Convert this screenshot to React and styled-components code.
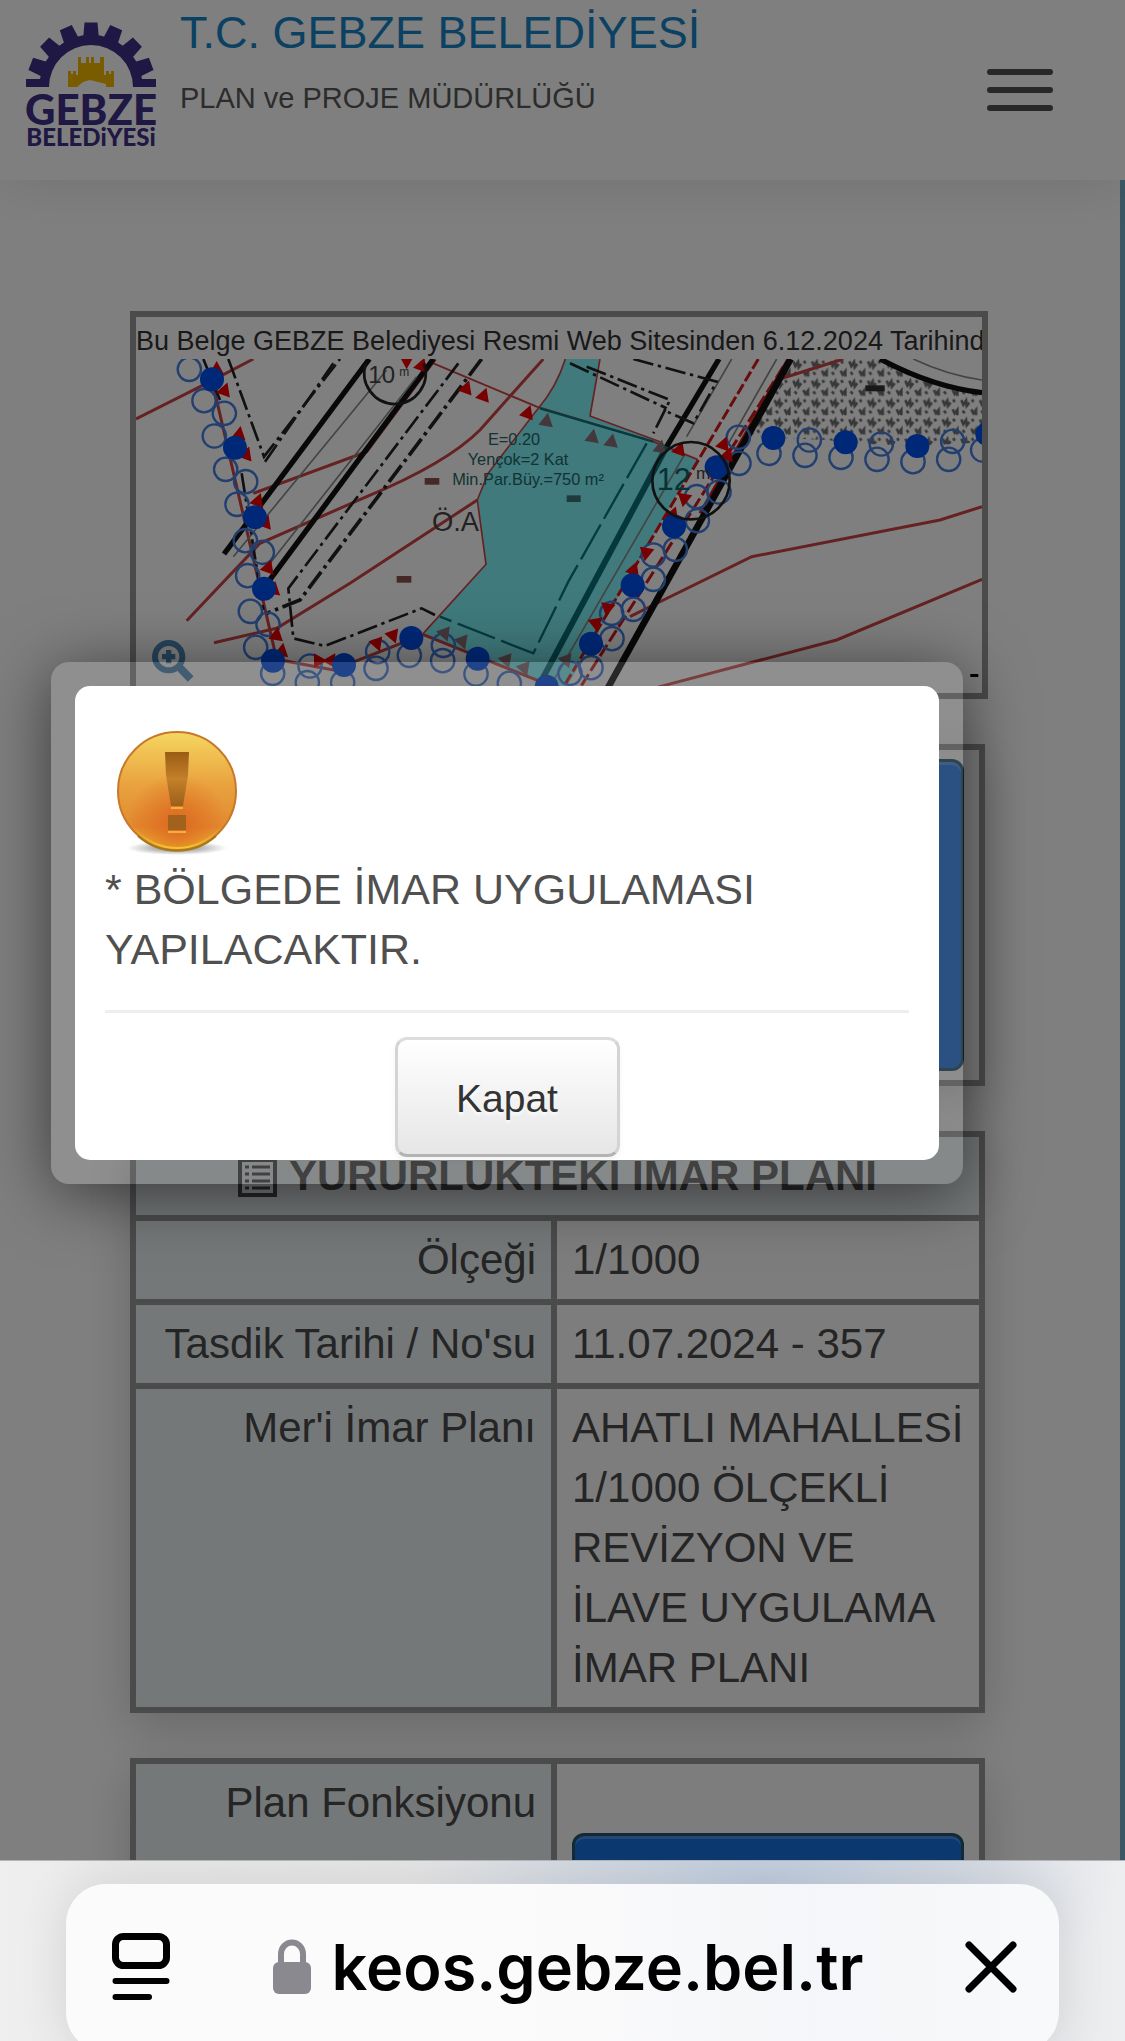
import React from "react";
import styled, { createGlobalStyle } from "styled-components";

const sans = '"Liberation Sans", Arial, Helvetica, sans-serif';

const GlobalStyle = createGlobalStyle`
  *, *::before, *::after { box-sizing: border-box; }
  html, body { margin: 0; height: 100%; overflow: hidden; }
  body { font-family: ${sans}; color: #4a4a4a; background: #fff; }
  h1, p { margin: 0; }
  button { font: inherit; cursor: pointer; }
`;

const Screen = styled.div`
  display: flex;
  flex-direction: column;
  height: 100vh;
`;

const Viewport = styled.div`
  position: relative;
  flex: 1;
  min-height: 0;
  overflow: hidden;
  background: #fff;
`;

const Header = styled.header`
  position: relative;
  display: flex;
  align-items: flex-start;
  gap: 22px;
  height: 180px;
  padding: 3px 70px 0 24px;
  background: #fff;
  box-shadow: 0 0 60px rgba(0, 0, 0, 0.12);
`;

const LogoLink = styled.a`
  display: block;
  padding-top: 17px;
  svg { display: block; overflow: visible; }
`;

const Brand = styled.div`
  flex: 1;
`;

const BrandTitle = styled.h1`
  font-size: 45px;
  line-height: 60px;
  font-weight: 400;
  color: #1782c4;
`;

const BrandUnit = styled.p`
  padding-top: 5px;
  font-size: 29px;
  line-height: 60px;
  color: #585858;
`;

const MenuButton = styled.button`
  display: flex;
  flex-direction: column;
  gap: 12px;
  width: 70px;
  padding: 66px 2px 12px;
  border: 0;
  background: none;
  span {
    height: 6px;
    border-radius: 3px;
    background: #505050;
  }
`;

const Main = styled.main`
  display: flex;
  flex-direction: column;
  gap: 45px;
  padding: 131px 132px 0 130px;
  border-right: 5px solid #7ab0c8;
`;

const MapFrame = styled.figure`
  margin: 0;
  display: flex;
  flex-direction: column;
  border: 6px solid #969696;
  background: #fff;
  overflow: hidden;
`;

const MapCaption = styled.figcaption`
  font-size: 27px;
  line-height: 42px;
  padding-top: 3px;
  height: 42px;
  color: #333;
  white-space: nowrap;
  overflow: hidden;
`;

const MapDrawing = styled.svg`
  display: block;
  width: 100%;
  height: auto;
`;

const InfoTable = styled.table`
  width: calc(100% - 3px);
  border-collapse: collapse;
  table-layout: fixed;
  font-size: 42px;
  line-height: 60px;
  background: #fafafa;
  box-shadow: 0 15px 45px rgba(0, 0, 0, 0.18);
`;

const cell = `
  border: 6px solid #969696;
  padding: 9px 15px;
  vertical-align: top;
`;

const Caption = styled.th`
  ${cell}
  background: #eaf1f3;
  text-align: center;
  svg { vertical-align: -7px; margin-right: 12px; }
`;

const Label = styled.th`
  ${cell}
  background: #eaf1f3;
  font-weight: 400;
  text-align: right;
`;

const Value = styled.td`
  ${cell}
  padding-right: ${(p) => (p.$text ? "9px" : "15px")};
`;

const BlueButton = styled.button`
  display: block;
  width: 100%;
  height: 312px;
  margin-top: ${(p) => (p.$lowered ? "60px" : "0")};
  border: 3px solid #20546e;
  border-radius: 12px;
  background: #1870e0;
  box-shadow: inset 0 3px 0 rgba(255, 255, 255, 0.2);
`;

const Backdrop = styled.div`
  position: absolute;
  inset: 0;
  display: flex;
  align-items: flex-start;
  padding: 662px 162px 0 51px;
  background: rgba(0, 0, 0, 0.5);
`;

const DialogFrame = styled.div`
  flex: 1;
  padding: 24px;
  border-radius: 18px;
  background: rgba(255, 255, 255, 0.13);
  box-shadow: 0 9px 66px rgba(0, 0, 0, 0.55);
`;

const Dialog = styled.section`
  display: flex;
  flex-direction: column;
  padding: 36px 30px 3px;
  border-radius: 15px;
  background: #fff;
`;

const Message = styled.p`
  font-size: 43px;
  line-height: 60px;
  color: #505050;
`;

const Divider = styled.hr`
  width: 100%;
  height: 3px;
  margin: 31px 0 24px;
  border: 0;
  background: #eee;
`;

const CloseButton = styled.button`
  align-self: center;
  width: 225px;
  height: 120px;
  padding-top: 4px;
  border: 3px solid;
  border-color: #dcdcdc #d4d4d4 #b3b3b3;
  border-radius: 12px;
  background: linear-gradient(#ffffff, #e6e6e6);
  box-shadow: 0 3px 6px rgba(0, 0, 0, 0.05);
  font-size: 39px;
  color: #333;
  text-shadow: 0 3px 3px rgba(255, 255, 255, 0.75);
`;

const BrowserBar = styled.footer`
  height: 181px;
  flex: none;
  overflow: hidden;
  padding: 23px 66px 0;
  border-top: 1px solid #b4b4b8;
  background:
    radial-gradient(ellipse 350px 150px at 68% 20px, rgba(176, 194, 218, 0.7), rgba(176, 194, 218, 0)),
    linear-gradient(90deg, #efefef, #e8e8e8 12%, #e4e4e5 50%, #e2e3e6 85%, #edeef0);
`;

const AddressBar = styled.div`
  display: flex;
  align-items: center;
  justify-content: space-between;
  height: 168px;
  padding: 0 42px 3px 46px;
  border-radius: 40px;
  background: linear-gradient(90deg, #fbfbfb 45%, #f5f6f9 75%, #f8f9fa);
  box-shadow: 0 0 50px rgba(0, 0, 0, 0.1);
`;

const IconButton = styled.button`
  display: block;
  padding: 0;
  border: 0;
  background: none;
  svg { display: block; }
`;

const Address = styled.button`
  display: flex;
  align-items: center;
  gap: 20px;
  padding: 0;
  border: 0;
  background: none;
  color: #000;
  font-family: Inter, "Liberation Sans", sans-serif;
  font-size: 63px;
  line-height: 84px;
  font-weight: 600;
`;

function Logo() {
  const teeth = [-69, -46, -23, 0, 23, 46, 69];
  return (
    <svg width="134" height="130" viewBox="24 20 134 130" aria-hidden="true">
      <g fill="#403088">
        <path d="M26 87V79H40A51.500 51.500 0 0 1 142 79H156V87H133A42 42 0 0 0 49 87Z" />
        {teeth.map((a) => (
          <path key={a} d="M84.500 22.500H97.500L99 40H83Z" transform={`rotate(${a} 91 87)`} />
        ))}
      </g>
      <path
        fill="#f4b800"
        d="M68 87V71H71V74H73V71H76V75H78V57H81V63H86V57H89V63H91V57H94V63H100V57H104V75H106V71H109V74H111V71H114V87H106V84L98 82L90 80L83 82L77 87Z"
      />
      <g fill="#403088" textAnchor="middle" fontFamily="Lato, sans-serif">
        <text x="91" y="125" fontSize="42" fontWeight="900">GEBZE</text>
        <text x="91" y="146" fontSize="24" fontWeight="900">BELEDiYESi</text>
      </g>
    </svg>
  );
}

const solidDots = [
  [276, 238], [345, 443], [405, 652], [432, 866], [459, 1082], [672, 1095], [874, 1014],
  [1073, 1076], [1280, 1160], [1413, 1031], [1538, 856], [1662, 679], [1790, 502],
  [1960, 414], [2177, 427], [2392, 438], [2602, 402],
];

const rings = [
  [208, 208], [252, 302], [313, 340], [283, 408], [317, 508], [377, 545], [351, 613],
  [376, 722], [427, 757], [383, 827], [391, 934], [444, 973], [407, 1042], [458, 1120],
  [570, 1098], [562, 1148], [668, 1148], [773, 1055], [768, 1105], [868, 1066], [970, 1036],
  [968, 1082], [1068, 1122], [1168, 1150], [1855, 412], [1857, 490], [1947, 460], [2068, 420],
  [2055, 466], [2163, 472], [2284, 432], [2271, 478], [2379, 485], [2498, 424], [2486, 478],
  [2588, 450], [1730, 590], [1797, 576], [1732, 662], [1666, 748], [1600, 765], [1600, 838],
  [1540, 928], [1475, 940], [1476, 1016], [1413, 1103], [1350, 1120],
];

const markers = [
  [290, 205, 0], [315, 268, 20], [358, 400, 10], [380, 460, 20], [415, 600, 20], [438, 665, 20],
  [446, 800, 20], [462, 865, 10], [470, 1002, 10], [486, 1050, 10], [600, 1082, 90],
  [628, 1082, -90], [772, 1034, 160], [820, 1010, 160], [860, 186, 180], [906, 194, 20],
  [1040, 262, 20], [1092, 284, 20], [1224, 336, 20], [1680, 446, 20], [1812, 430, 20],
  [1824, 462, 20], [1692, 600, 190], [1660, 640, 20], [1578, 762, 190], [1542, 806, 20],
  [1462, 928, 190], [1428, 974, 170],
];

const mutedMarkers = [
  [1280, 360, 10], [1418, 408, 10], [1475, 422, 10], [1622, 440, 10], [975, 1004, 160],
  [1028, 1028, 160], [1160, 1084, 160], [1214, 1108, 160], [1340, 1084, 160],
];

function ZoningMap() {
  return (
    <MapDrawing viewBox="48 177 2538 1002" role="img" aria-label="İmar planı haritası">
      <defs>
        <pattern id="scrub" width="56" height="58" patternUnits="userSpaceOnUse">
          <path
            d="M4 10l6 14 8-12 2 16 8-10M34 38l6 12 8-10 0 16M36 8l4 8M8 42l6 8"
            fill="none"
            stroke="#707070"
            strokeWidth="8"
          />
        </pattern>
      </defs>
      <path d="M1960 250L2020 177H2290Q2420 250 2586 280V425Q2350 450 2120 420L1890 410Z" fill="url(#scrub)" />
      <path
        d="M1336 177H1440L1410 348L1620 425L1732 478L1330 1179L910 1000L1098 793L1072 600L1104 520L1250 335L1290 280Z"
        fill="#80f4f8"
      />
      <g fill="none" stroke="#c44" strokeWidth="9">
        <path d="M48 357L260 250L400 177" />
        <path d="M400 580L740 455L946 177" />
        <path d="M200 962L420 730L740 590Q980 490 1080 390L1270 177" />
        <path d="M282 1028L470 985L690 850L1072 600" />
        <path d="M940 190L1250 320L1600 425L1732 478" strokeWidth="6" />
        <path d="M1336 177Q1310 260 1255 325L1104 520L1072 600L1098 793L910 1000" strokeWidth="5" />
        <path d="M276 240L470 1078L640 1110L910 1004L1300 1160" />
        <path d="M1440 177L1410 348L1620 425" strokeWidth="5" />
        <path d="M1530 950L1600 915L1895 770L2460 660L2586 620" />
        <path d="M1600 1165L2150 1020L2586 838" />
        <path d="M1970 240L2170 177" />
      </g>
      <g fill="none" stroke="#d01818" strokeWidth="9">
        <path d="M1915 177L1320 1179" strokeDasharray="34 10" />
        <path d="M1990 200L1370 1179" strokeDasharray="40 12" />
        <path d="M2004 177L1740 640" />
      </g>
      <g fill="none" stroke="#111" strokeWidth="16">
        <path d="M748 177L312 762" />
        <path d="M940 177L437 856" />
        <path d="M1797 177L1640 440" />
        <path d="M2012 177L1460 1170" strokeWidth="20" />
        <path d="M2280 177Q2440 262 2586 278" />
      </g>
      <path d="M1640 440L1260 1150" fill="none" stroke="#087078" strokeWidth="18" />
      <g fill="none" stroke="#888" strokeWidth="5">
        <path d="M800 210L340 770M890 230L450 790" />
        <path d="M1835 177L1700 410M1970 177L1820 440M1690 470L1290 1160" />
        <path d="M2380 177Q2480 225 2586 240" />
      </g>
      <g fill="none" stroke="#222" strokeWidth="8" strokeDasharray="62 14 10 14">
        <path d="M325 177L432 470L660 177" />
        <path d="M435 485L640 190" />
        <path d="M1085 177L540 900L440 940" strokeWidth="11" />
        <path d="M1015 190L505 865L520 1015L615 1038L905 925L945 945" />
        <path d="M365 520L430 930M250 177L300 300" />
        <path d="M1350 190L1640 325M1400 200L1650 300L1600 400M1540 177L1790 245L1720 370L1630 330" />
      </g>
      <g fill="none" stroke="#0b777c" strokeWidth="7">
        <path d="M1580 430L1345 845L1240 1060L960 950" strokeDasharray="120 20" />
        <path d="M1260 325L1600 425" />
      </g>
      <g fill="none" stroke="#447fe0" strokeWidth="7">
        {rings.map(([x, y]) => (
          <circle key={`${x}-${y}`} cx={x} cy={y} r="35" />
        ))}
      </g>
      <g fill="#f00000">
        {markers.map(([x, y, a]) => (
          <path key={`${x}-${y}`} d="M0-22L22 18H-22Z" transform={`translate(${x} ${y}) rotate(${a})`} />
        ))}
      </g>
      <g fill="#8a7078">
        {mutedMarkers.map(([x, y, a]) => (
          <path key={`${x}-${y}`} d="M0-22L22 18H-22Z" transform={`translate(${x} ${y}) rotate(${a})`} />
        ))}
      </g>
      <g fill="#0050f0">
        {solidDots.map(([x, y]) => (
          <circle key={`${x}-${y}`} cx={x} cy={y} r="36" />
        ))}
      </g>
      <g fill="none" stroke="#222" strokeWidth="8">
        <path d="M738 190A92 92 0 1 0 912 190" />
        <circle cx="1713" cy="542" r="116" />
      </g>
      <g fill="#444" fontFamily='"Liberation Sans", sans-serif'>
        <text x="745" y="250" fontSize="72">10</text>
        <text x="838" y="228" fontSize="36">m</text>
        <text x="1610" y="570" fontSize="92" fill="#0b666c">12</text>
        <text x="1728" y="536" fontSize="52">m</text>
        <text x="936" y="692" fontSize="82">Ö.A</text>
      </g>
      <g fill="#24666a" fontFamily='"Liberation Sans", sans-serif' fontSize="49" textAnchor="middle">
        <text x="1182" y="436">E=0.20</text>
        <text x="1194" y="496">Yençok=2 Kat</text>
        <text x="1224" y="556">Min.Par.Büy.=750 m²</text>
      </g>
      <g fill="#8a5050">
        <rect x="914" y="534" width="44" height="20" />
        <rect x="830" y="828" width="44" height="20" />
        <rect x="1340" y="586" width="42" height="20" fill="#3a7478" />
        <rect x="2236" y="256" width="58" height="18" fill="#333" />
      </g>
      <rect x="2551" y="1122" width="24" height="9" fill="#000" />
      <g fill="none" stroke="#4e88b8">
        <circle cx="146" cy="1070" r="41" strokeWidth="18" />
        <path d="M178 1102L212 1137" strokeWidth="24" />
        <path d="M146 1050V1090M126 1070H166" strokeWidth="16" />
      </g>
    </MapDrawing>
  );
}

function ListIcon() {
  return (
    <svg width="39" height="39" viewBox="0 0 39 39" aria-hidden="true">
      <path d="M2 2H37V37H2Z" fill="none" stroke="#4a4a4a" strokeWidth="4" />
      <path
        d="M14 9H32M14 16H32M14 23H32M14 30H32M7 9H11M7 16H11M7 23H11M7 30H11"
        stroke="#4a4a4a"
        strokeWidth="3"
      />
    </svg>
  );
}

function WarningIcon() {
  return (
    <svg width="144" height="137" viewBox="105 722 144 137" role="img" aria-label="Uyarı">
      <defs>
        <linearGradient id="coin" x1="0" y1="0" x2="0" y2="1">
          <stop offset="0" stopColor="#f5d660" />
          <stop offset="0.45" stopColor="#e9a23e" />
          <stop offset="0.8" stopColor="#e28a30" />
          <stop offset="1" stopColor="#f2cb30" />
        </linearGradient>
        <radialGradient id="ember" cx="0.5" cy="0.8" r="0.45">
          <stop offset="0" stopColor="#dd6820" />
          <stop offset="1" stopColor="#dd6820" stopOpacity="0" />
        </radialGradient>
        <radialGradient id="ground">
          <stop offset="0" stopColor="#555" stopOpacity="0.8" />
          <stop offset="1" stopColor="#555" stopOpacity="0" />
        </radialGradient>
        <linearGradient id="mark" x1="0" y1="0" x2="0" y2="1">
          <stop offset="0" stopColor="#9a5c14" />
          <stop offset="0.5" stopColor="#c4802a" />
          <stop offset="1" stopColor="#9c601a" />
        </linearGradient>
      </defs>
      <ellipse cx="177" cy="848" rx="50" ry="7" fill="url(#ground)" />
      <circle cx="177" cy="791" r="59" fill="url(#coin)" stroke="#c8782a" strokeWidth="2" />
      <circle cx="177" cy="791" r="56" fill="url(#ember)" />
      <path d="M138 836A59 59 0 0 0 216 836" fill="none" stroke="#a87818" strokeWidth="2" />
      <path d="M165 752H189L188 775L183 806H171L166 775Z" fill="url(#mark)" />
      <path d="M168 815H186V830H168Z" fill="#a0621c" />
      <path d="M171 808H183M168 832H186" stroke="#f0b040" strokeWidth="2" />
    </svg>
  );
}

function Columns() {
  return (
    <colgroup>
      <col width="421" />
      <col />
    </colgroup>
  );
}

export default function App() {
  return (
    <Screen>
      <GlobalStyle />
      <Viewport>
        <Header>
          <LogoLink href="#" aria-label="Gebze Belediyesi">
            <Logo />
          </LogoLink>
          <Brand>
            <BrandTitle>T.C. GEBZE BELEDİYESİ</BrandTitle>
            <BrandUnit>PLAN ve PROJE MÜDÜRLÜĞÜ</BrandUnit>
          </Brand>
          <MenuButton aria-label="Menü">
            <span />
            <span />
            <span />
          </MenuButton>
        </Header>
        <Main>
          <MapFrame>
            <MapCaption>Bu Belge GEBZE Belediyesi Resmi Web Sitesinden 6.12.2024 Tarihind</MapCaption>
            <ZoningMap />
          </MapFrame>
          <InfoTable>
            <Columns />
            <tbody>
              <tr>
                <Label scope="row" />
                <Value>
                  <BlueButton aria-label="Plan Notu" />
                </Value>
              </tr>
            </tbody>
          </InfoTable>
          <InfoTable>
            <Columns />
            <tbody>
              <tr>
                <Caption colSpan={2}>
                  <ListIcon />
                  YÜRÜRLÜKTEKİ İMAR PLANI
                </Caption>
              </tr>
              <tr>
                <Label scope="row">Ölçeği</Label>
                <Value $text>1/1000</Value>
              </tr>
              <tr>
                <Label scope="row">Tasdik Tarihi / No'su</Label>
                <Value $text>11.07.2024 - 357</Value>
              </tr>
              <tr>
                <Label scope="row">Mer'i İmar Planı</Label>
                <Value $text>AHATLI MAHALLESİ 1/1000 ÖLÇEKLİ REVİZYON VE İLAVE UYGULAMA İMAR PLANI</Value>
              </tr>
            </tbody>
          </InfoTable>
          <InfoTable>
            <Columns />
            <tbody>
              <tr>
                <Label scope="row">Plan Fonksiyonu</Label>
                <Value>
                  <BlueButton $lowered aria-label="Plan Fonksiyonu" />
                </Value>
              </tr>
            </tbody>
          </InfoTable>
        </Main>
        <Backdrop>
          <DialogFrame>
            <Dialog role="dialog" aria-modal="true" aria-labelledby="notice">
              <WarningIcon />
              <Message id="notice">* BÖLGEDE İMAR UYGULAMASI YAPILACAKTIR.</Message>
              <Divider />
              <CloseButton>Kapat</CloseButton>
            </Dialog>
          </DialogFrame>
        </Backdrop>
      </Viewport>
      <BrowserBar>
        <AddressBar>
          <IconButton aria-label="Sayfa menüsü">
            <svg width="58" height="68" viewBox="0 0 58 68" fill="none" stroke="#000" strokeWidth="7">
              <rect x="3.500" y="3.500" width="51" height="29" rx="8" />
              <path d="M3.500 48H54.500M3.500 64H37" strokeWidth="6" strokeLinecap="round" />
            </svg>
          </IconButton>
          <Address>
            <svg width="40" height="56" viewBox="0 0 40 56" aria-hidden="true">
              <rect x="1" y="23" width="38" height="32" rx="6" fill="#8a8990" />
              <path d="M9 26V15A11 11.500 0 0 1 31 15V26" fill="none" stroke="#8a8990" strokeWidth="6" />
            </svg>
            keos.gebze.bel.tr
          </Address>
          <IconButton aria-label="Yüklemeyi durdur">
            <svg width="52" height="52" viewBox="0 0 52 52" stroke="#000" strokeWidth="7" strokeLinecap="round">
              <path d="M4 4L48 48M48 4L4 48" />
            </svg>
          </IconButton>
        </AddressBar>
      </BrowserBar>
    </Screen>
  );
}
